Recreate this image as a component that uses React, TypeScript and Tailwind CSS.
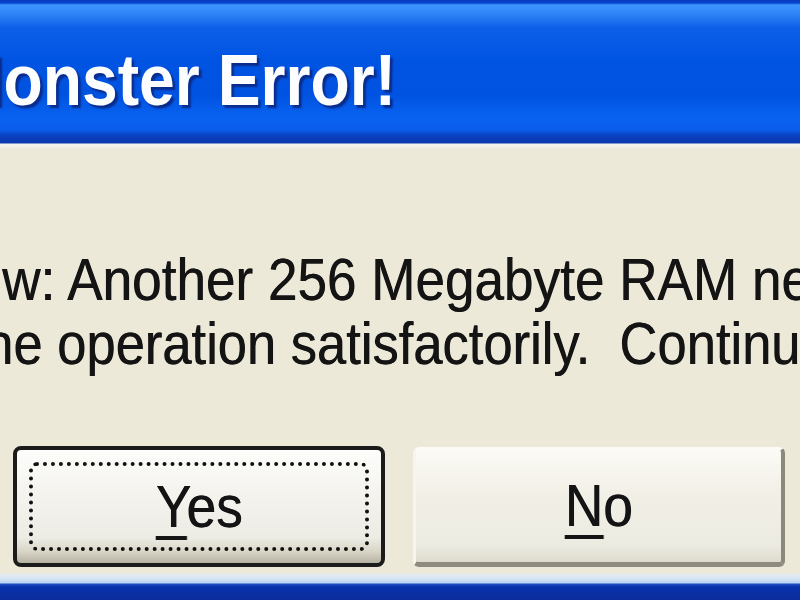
const titleBg =
  'bg-[linear-gradient(180deg,#0838c0_0px,#0a45d0_3px,#3d95ff_5px,#2e84f7_14px,#0d5fe8_28px,#0054e2_60px,#0053e0_95px,#0a63f2_118px,#0a5de9_130px,#0a3fc0_136px,#0b38ac_143px,#f3f2ec_144px,#f0eee6_148px)]';

const bottomBg =
  'bg-[linear-gradient(180deg,#ece9d8_0px,#e2eaf0_3px,#d3e4f6_7px,#b9d3f4_11px,#1f4fc4_12px,#0a31ab_15px,#0b2c9c_28px)]';

const Underlined = ({ first, rest }: { first: string; rest: string }) => (
  <span className="inline-block scale-x-[0.9] text-[59px] leading-[64px] text-[#141414] [text-shadow:0.6px_0_0_#141414] [font-family:'Liberation_Sans',Arial,sans-serif]">
    <span className="underline decoration-[4px] underline-offset-[9px]">{first}</span>
    {rest}
  </span>
);

const App = () => (
  <div className="w-[800px] h-[600px] overflow-hidden flex flex-col bg-[#ece9d8]">
    <div className={`h-[148px] shrink-0 pt-[43px] overflow-hidden ${titleBg}`}>
      <p className="ml-[-50px] whitespace-pre origin-left scale-x-[0.88] text-[73px] leading-[73px] font-bold text-[#fbfdff] [text-shadow:3px_3px_2px_#0a2c8c] [font-family:'Liberation_Sans',Arial,sans-serif]">
        Monster Error!
      </p>
    </div>

    <div className="flex-1 flex flex-col pt-[100px] overflow-hidden">
      <div className="text-[59px] leading-[64px] text-[#141414] whitespace-pre [text-shadow:0.6px_0_0_#141414] [font-family:'Liberation_Sans',Arial,sans-serif]">
        <p className="ml-[2px] origin-left scale-x-[0.9]">w: Another 256 Megabyte RAM needed to complete</p>
        <p className="ml-[-16px] origin-left scale-x-[0.89]">he operation satisfactorily.  Continue?</p>
      </div>

      <div className="mt-[70px] flex gap-[28px] pl-[13px]">
        <div className="w-[372px] h-[121px] shrink-0 rounded-[8px] border-[4px] border-[#1b1b1b] p-[12px] bg-[linear-gradient(180deg,#fdfdfb_0%,#f4f3ee_40%,#ecebe4_78%,#d9d5c6_90%,#b6b2a2_100%)]">
          <div className="h-full rounded-[8px] border-[4px] border-dotted border-[#111] flex items-center justify-center">
            <Underlined first="Y" rest="es" />
          </div>
        </div>
        <div className="w-[372px] h-[120px] mt-[1px] shrink-0 rounded-[6px] border-t-[3px] border-l-[3px] border-r-[4px] border-b-[5px] border-t-[#fbfbf7] border-l-[#f6f5ef] border-r-[#8c897c] border-b-[#8f8c7f] flex items-center justify-center bg-[linear-gradient(180deg,#fbfaf5_0%,#f1efe6_40%,#ecebe2_85%,#dedbcd_100%)]">
          <Underlined first="N" rest="o" />
        </div>
      </div>
    </div>

    <div className={`h-[28px] shrink-0 ${bottomBg}`} />
  </div>
);

export default App;
